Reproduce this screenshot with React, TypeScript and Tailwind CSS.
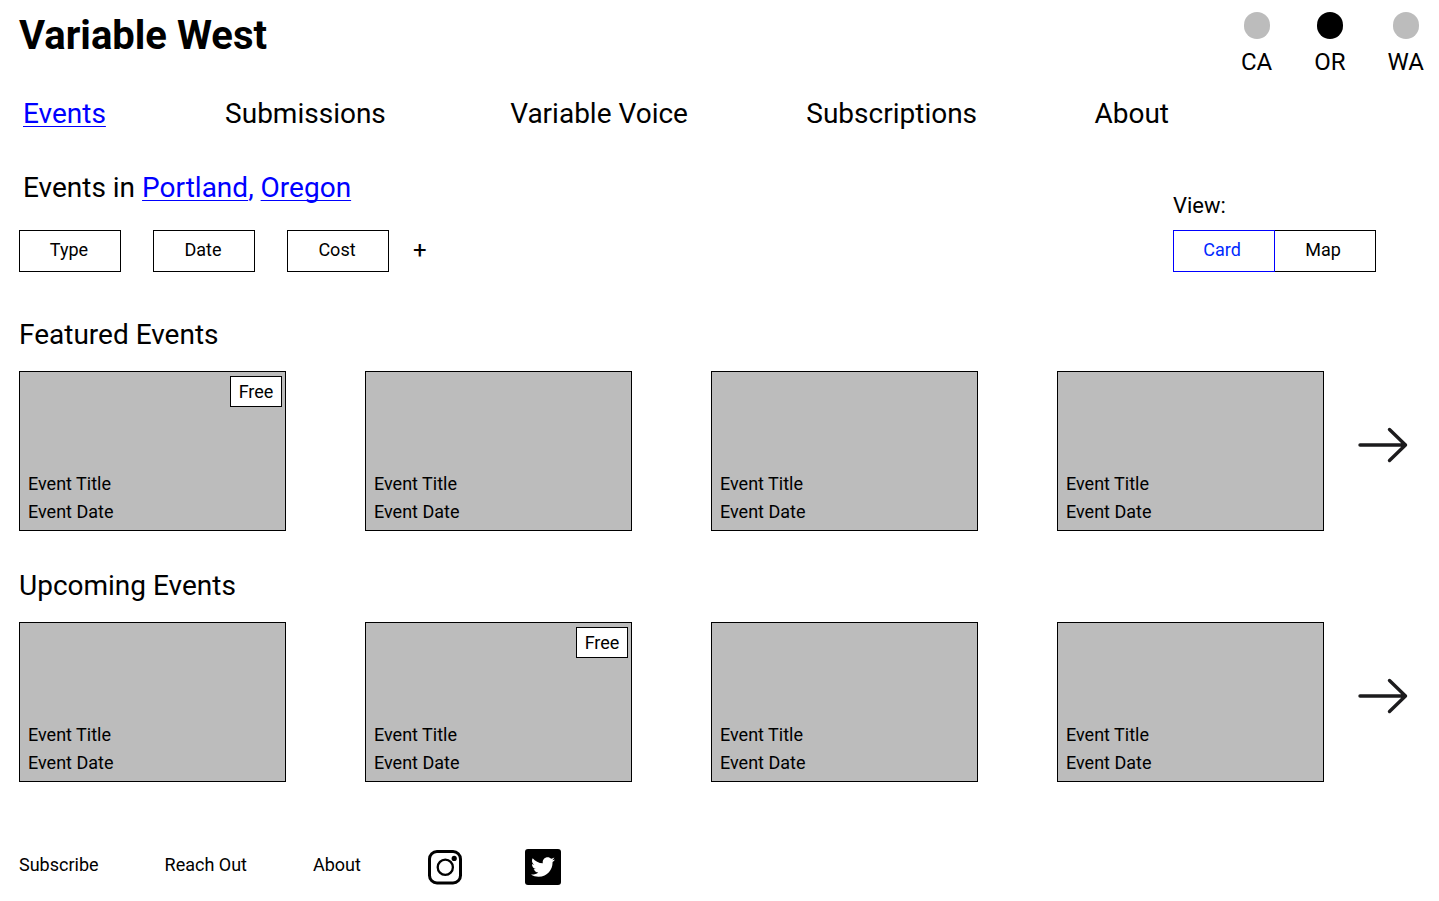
import React, { useState } from 'react';
import clsx from 'clsx';
import { FaTwitter } from 'react-icons/fa';

interface EventItem {
  id: number;
  title: string;
  date: string;
  free?: boolean;
}

const STATES = ['CA', 'OR', 'WA'];
const NAV_ITEMS = ['Events', 'Submissions', 'Variable Voice', 'Subscriptions', 'About'];
const FILTERS = ['Type', 'Date', 'Cost'];
const VIEWS = ['Card', 'Map'];

const featured: EventItem[] = [
  { id: 1, title: 'Event Title', date: 'Event Date', free: true },
  { id: 2, title: 'Event Title', date: 'Event Date' },
  { id: 3, title: 'Event Title', date: 'Event Date' },
  { id: 4, title: 'Event Title', date: 'Event Date' },
];

const upcoming: EventItem[] = [
  { id: 5, title: 'Event Title', date: 'Event Date' },
  { id: 6, title: 'Event Title', date: 'Event Date', free: true },
  { id: 7, title: 'Event Title', date: 'Event Date' },
  { id: 8, title: 'Event Title', date: 'Event Date' },
];

function ArrowIcon() {
  return (
    <svg width="50" height="36" viewBox="0 0 50 36" fill="none" stroke="#1c1b1d" strokeWidth="3.4" strokeLinecap="round" strokeLinejoin="round">
      <path d="M2 18H47.5M31.5 2.5L47.5 18L31.5 33.5" />
    </svg>
  );
}

function InstagramIcon() {
  return (
    <svg width="36" height="36" viewBox="0 0 36 36" fill="none" stroke="#000">
      <rect x="2.5" y="2.5" width="31" height="31.5" rx="7.5" strokeWidth="3" />
      <circle cx="18.3" cy="18.3" r="7.6" strokeWidth="2.3" />
      <circle cx="27.2" cy="9.4" r="2.6" fill="#000" stroke="none" />
    </svg>
  );
}

function EventCard({ event }: { event: EventItem }) {
  return (
    <article className="relative flex h-40 flex-col justify-end border border-black bg-[#bcbcbc] pb-1 pl-2 text-lg leading-7">
      {event.free && (
        <span className="absolute top-1 right-[3px] w-[52px] border border-black bg-white text-center leading-[29px]">Free</span>
      )}
      <h3>{event.title}</h3>
      <p>{event.date}</p>
    </article>
  );
}

function EventRow({ title, events, className }: { title: string; events: EventItem[]; className: string }) {
  return (
    <section className={className}>
      <h2 className="text-[28px] leading-9">{title}</h2>
      <div className="mt-[18px] flex items-center gap-[34px] pr-[31px]">
        <div className="grid flex-1 grid-cols-4 gap-[79px]">
          {events.map((event) => (
            <EventCard key={event.id} event={event} />
          ))}
        </div>
        <button aria-label={`More ${title}`} className="cursor-pointer pb-3">
          <ArrowIcon />
        </button>
      </div>
    </section>
  );
}

export default function App() {
  const [region, setRegion] = useState('OR');
  const [view, setView] = useState('Card');

  return (
    <div className="bg-white pt-3 pb-4 pl-[19px] font-['Roboto',sans-serif] text-black">
      {/* Header */}
      <header className="flex items-start justify-between pr-[15px]">
        <h1 className="text-[40px] leading-[48px] font-bold">Variable West</h1>
        <div className="flex gap-[42px]">
          {STATES.map((name) => (
            <button
              key={name}
              aria-pressed={region === name}
              onClick={() => setRegion(name)}
              className="flex cursor-pointer flex-col items-center gap-2 text-2xl leading-[30px]"
            >
              <span className={clsx('h-[27px] w-[26px] rounded-full', region === name ? 'bg-black' : 'bg-[#bcbcbc]')} />
              {name}
            </button>
          ))}
        </div>
      </header>

      <nav className="mt-[19px] grid grid-cols-[202fr_285fr_296fr_288fr_auto] pr-[270px] pl-1 text-[28px] leading-9 whitespace-nowrap">
        {NAV_ITEMS.map((item) => (
          <a
            key={item}
            href="#"
            className={clsx('justify-self-start', item === 'Events' && 'text-[#0000ff] underline decoration-1 underline-offset-3')}
          >
            {item}
          </a>
        ))}
      </nav>

      <main>
        {/* Location, filters and view switch */}
        <div className="mt-[38px] flex items-end justify-between pr-[63px]">
          <div>
            <h2 className="pl-1 text-[28px] leading-9">
              Events in{' '}
              <span className="text-[#0000ff] decoration-1">
                <a href="#" className="underline decoration-1 underline-offset-3">Portland</a>,{' '}
                <a href="#" className="underline decoration-1 underline-offset-3 [text-decoration-skip-ink:none]">Oregon</a>
              </span>
            </h2>
            <div className="mt-6 flex items-center gap-8 text-lg leading-7">
              {FILTERS.map((filter) => (
                <button key={filter} className="h-[42px] w-[102px] cursor-pointer border border-black pr-0.5 pb-0.5">
                  {filter}
                </button>
              ))}
              <button aria-label="Add filter" className="-ml-2 cursor-pointer pb-0.5 text-2xl">+</button>
            </div>
          </div>

          <div>
            <p id="view-label" className="mb-2.5 text-[22px] leading-7">View:</p>
            <div role="group" aria-labelledby="view-label" className="flex text-lg leading-7">
              {VIEWS.map((name) => (
                <button
                  key={name}
                  aria-pressed={view === name}
                  onClick={() => setView(name)}
                  className={clsx(
                    'h-[42px] w-[102px] cursor-pointer border pr-1 pb-0.5 not-first:-ml-px',
                    view === name ? 'relative border-[#0000ff] text-[#0029ff]' : 'border-black'
                  )}
                >
                  {name}
                </button>
              ))}
            </div>
          </div>
        </div>

        <EventRow title="Featured Events" events={featured} className="mt-[45px]" />
        <EventRow title="Upcoming Events" events={upcoming} className="mt-[37px]" />
      </main>

      {/* Footer */}
      <footer className="mt-[67px] flex items-center gap-[66px] text-lg leading-7">
        <a href="#" className="pb-1">Subscribe</a>
        <a href="#" className="pb-1">Reach Out</a>
        <a href="#" className="pb-1">About</a>
        <div className="flex items-center gap-[62px]">
          <a href="#" aria-label="Instagram">
            <InstagramIcon />
          </a>
          <a href="#" aria-label="Twitter" className="flex size-9 items-center justify-center rounded-[3px] bg-black">
            <FaTwitter className="size-6 text-white" />
          </a>
        </div>
      </footer>
    </div>
  );
}
